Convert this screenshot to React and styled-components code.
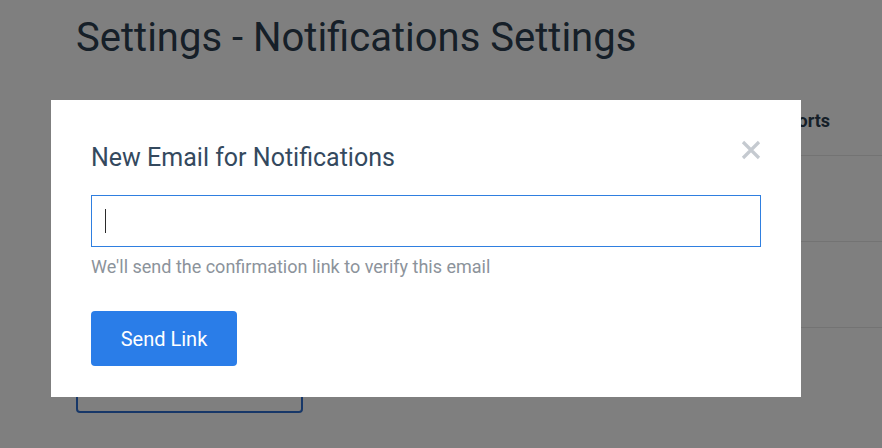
import React from "react";
import styled, { createGlobalStyle } from "styled-components";

const Global = createGlobalStyle`
  html, body { margin: 0; padding: 0; background: #fff; }
  body { font-family: Roboto, "Liberation Sans", sans-serif; overflow: hidden; }
  * { box-sizing: border-box; }
`;

const Page = styled.div`
  width: 882px;
  height: 448px;
  padding: 14px 0 0 76px;
  overflow: hidden;
`;

const PageTitle = styled.h1`
  margin: 0;
  font-size: 40px;
  font-weight: 400;
  color: #2c3e50;
  line-height: 48px;
`;

const Table = styled.div`
  margin-top: 38px;
  width: 900px;
`;

const HeadRow = styled.div`
  display: grid;
  grid-template-columns: 1fr 140px 140px 140px;
  height: 56px;
  align-items: start;
  padding-top: 10px;
  border-bottom: 1px solid #e6e6e6;
  padding-right: 146px;
`;

const HeadCell = styled.div`
  font-size: 18px;
  line-height: 22px;
  font-weight: 700;
  color: #2c3e50;
  text-align: ${(p) => (p.$right ? "right" : "left")};
`;

const Row = styled.div`
  height: 86px;
  border-bottom: 1px solid #e6e6e6;
`;

const OutlineButton = styled.button`
  display: block;
  margin-top: 10px;
  width: 227px;
  height: 75px;
  border: 2px solid #2f6fd0;
  border-radius: 4px;
  background: #fff;
`;

const Overlay = styled.div`
  position: fixed;
  inset: 0;
  background: rgba(0, 0, 0, 0.5);
  padding: 100px 0 0 51px;
`;

const Modal = styled.div`
  position: relative;
  width: 750px;
  height: 297px;
  background: #fff;
  padding: 43px 40px 0 40px;
`;

const ModalTitle = styled.h2`
  margin: 0;
  font-size: 25px;
  font-weight: 400;
  color: #34495e;
  line-height: 30px;
`;

const CloseButton = styled.button`
  position: absolute;
  top: 40px;
  right: 40px;
  width: 20px;
  height: 20px;
  padding: 0;
  border: 0;
  background: transparent;
  display: flex;
  align-items: center;
  justify-content: center;
`;

const Field = styled.div`
  position: relative;
  margin-top: 22px;
`;

const Input = styled.input`
  display: block;
  width: 100%;
  height: 52px;
  border: 1px solid #2f7fe0;
  border-radius: 0;
  outline: none;
  padding: 0 14px;
  font-size: 18px;
  font-family: Roboto, "Liberation Sans", sans-serif;
  color: #34495e;
`;

const Caret = styled.span`
  position: absolute;
  left: 14px;
  top: 14px;
  width: 1px;
  height: 24px;
  background: #2b2b2b;
`;

const Helper = styled.p`
  margin: 9px 0 0;
  font-size: 18px;
  line-height: 22px;
  color: #8c939b;
`;

const PrimaryButton = styled.button`
  margin-top: 33px;
  width: 146px;
  height: 55px;
  border: 0;
  border-radius: 4px;
  background: #2a7de8;
  color: #fff;
  font-family: Roboto, "Liberation Sans", sans-serif;
  font-size: 20px;
  cursor: pointer;
`;

export default function App() {
  return (
    <>
      <Global />
      <Page>
        <PageTitle>Settings - Notifications Settings</PageTitle>
        <Table>
          <HeadRow>
            <HeadCell>Notification</HeadCell>
            <HeadCell $right>Email</HeadCell>
            <HeadCell $right>SMS</HeadCell>
            <HeadCell $right>Reports</HeadCell>
          </HeadRow>
          <Row />
          <Row />
        </Table>
        <OutlineButton />
      </Page>
      <Overlay>
        <Modal>
          <ModalTitle>New Email for Notifications</ModalTitle>
          <CloseButton aria-label="Close">
            <svg width="20" height="20" viewBox="0 0 20 20">
              <path d="M2 2 L18 18 M18 2 L2 18" stroke="#c5cad0" strokeWidth="3.2" strokeLinecap="butt" />
            </svg>
          </CloseButton>
          <Field>
            <Input type="email" />
            <Caret />
          </Field>
          <Helper>We'll send the confirmation link to verify this email</Helper>
          <PrimaryButton>Send Link</PrimaryButton>
        </Modal>
      </Overlay>
    </>
  );
}
